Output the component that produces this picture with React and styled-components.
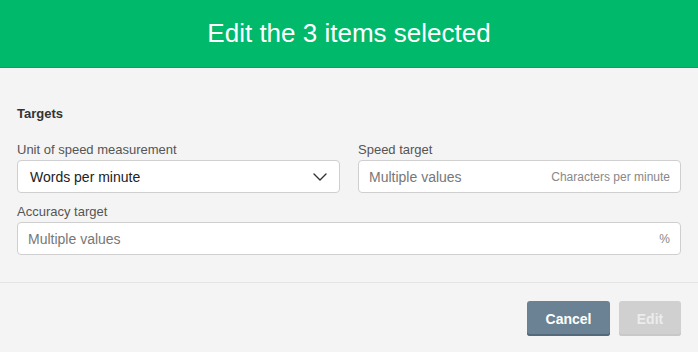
import React from "react";
import styled, { createGlobalStyle } from "styled-components";

const Global = createGlobalStyle`
  html, body { margin: 0; padding: 0; background: #f4f4f4; }
  body { font-family: "Liberation Sans", Arial, sans-serif; }
  * { box-sizing: border-box; }
`;

const Page = styled.div`
  width: 698px;
  height: 352px;
  background: #f4f4f4;
  display: flex;
  flex-direction: column;
`;

const Header = styled.header`
  height: 68px;
  background: #00b96b;
  border-bottom: 1px solid #07a25f;
  display: flex;
  align-items: center;
  justify-content: center;
`;

const Title = styled.h1`
  margin: 0;
  font-size: 26px;
  font-weight: 400;
  color: #ffffff;
`;

const Body = styled.section`
  padding: 38px 17px 0;
  border-bottom: 1px solid #e4e4e4;
  height: 215px;
`;

const SectionTitle = styled.h2`
  margin: 0 0 20px;
  font-size: 13px;
  font-weight: 700;
  color: #333;
  line-height: 16px;
`;

const Grid = styled.div`
  display: grid;
  grid-template-columns: 1fr 1fr;
  column-gap: 18px;
  row-gap: 11px;
`;

const Field = styled.div`
  display: flex;
  flex-direction: column;
  grid-column: ${(p) => (p.$wide ? "1 / span 2" : "auto")};
`;

const Label = styled.label`
  font-size: 13px;
  color: #555;
  line-height: 16px;
  margin-bottom: 2px;
`;

const Box = styled.div`
  height: 33px;
  background: #fff;
  border: 1px solid #cfcfcf;
  border-radius: 4px;
  display: flex;
  align-items: center;
  justify-content: space-between;
  padding: 0 ${(p) => (p.$select ? "12px" : "10px")};
`;

const Value = styled.span`
  font-size: 14px;
  color: ${(p) => (p.$placeholder ? "#777" : "#222")};
`;

const Suffix = styled.span`
  font-size: 12px;
  color: #888;
`;

const Footer = styled.footer`
  display: flex;
  justify-content: flex-end;
  gap: 9px;
  padding: 18px 17px 0;
`;

const Button = styled.button`
  height: 35px;
  min-width: ${(p) => p.$w}px;
  padding: 0 16px;
  border: none;
  border-radius: 3px;
  font-family: inherit;
  font-size: 14px;
  font-weight: 700;
  color: ${(p) => (p.$disabled ? "#ececec" : "#fff")};
  background: ${(p) => (p.$disabled ? "#d0d0d0" : "#6b8294")};
  box-shadow: inset 0 -2px 0 ${(p) => (p.$disabled ? "#c8c8c8" : "#546a7b")};
  cursor: pointer;
`;

const Chevron = () => (
  <svg width="14" height="8" viewBox="0 0 14 8" fill="none">
    <path d="M1 1l6 6 6-6" stroke="#333" strokeWidth="1.4" strokeLinecap="round" strokeLinejoin="round" />
  </svg>
);

export default function App() {
  return (
    <Page>
      <Global />
      <Header>
        <Title>Edit the 3 items selected</Title>
      </Header>
      <Body>
        <SectionTitle>Targets</SectionTitle>
        <Grid>
          <Field>
            <Label>Unit of speed measurement</Label>
            <Box $select>
              <Value>Words per minute</Value>
              <Chevron />
            </Box>
          </Field>
          <Field>
            <Label>Speed target</Label>
            <Box>
              <Value $placeholder>Multiple values</Value>
              <Suffix>Characters per minute</Suffix>
            </Box>
          </Field>
          <Field $wide>
            <Label>Accuracy target</Label>
            <Box>
              <Value $placeholder>Multiple values</Value>
              <Suffix>%</Suffix>
            </Box>
          </Field>
        </Grid>
      </Body>
      <Footer>
        <Button $primary $w={83}>Cancel</Button>
        <Button $disabled $w={62}>Edit</Button>
      </Footer>
    </Page>
  );
}
